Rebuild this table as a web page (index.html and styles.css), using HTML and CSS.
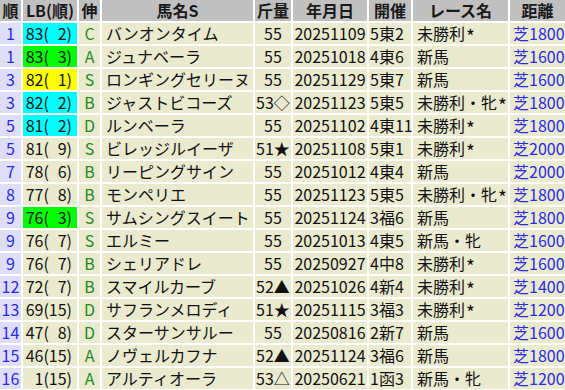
FILE: index.html
```html
<!DOCTYPE html>
<html lang="ja">
<head>
<meta charset="utf-8">
<link rel="stylesheet" href="styles.css">
</head>
<body>
<table class="tbl">
<colgroup>
<col class="w-no"><col class="w-lb"><col class="w-nb"><col class="w-name"><col class="w-kin"><col class="w-date"><col class="w-kai"><col class="w-race"><col class="w-dist">
</colgroup>
<thead>
<tr><th>順</th><th>LB(順)</th><th>伸</th><th>馬名S</th><th>斤量</th><th>年月日</th><th>開催</th><th>レース名</th><th>距離</th></tr>
</thead>
<tbody>
<tr><td class="no">1</td><td class="lb cy">83(&#8199;2)</td><td class="nb">C</td><td class="name">バンオンタイム</td><td class="kin">55</td><td class="date">20251109</td><td class="kai">5東2</td><td class="race">未勝利<span class="ast">*</span></td><td class="dist">芝1800</td></tr>
<tr><td class="no">1</td><td class="lb gr">83(&#8199;3)</td><td class="nb">A</td><td class="name">ジュナベーラ</td><td class="kin">55</td><td class="date">20251018</td><td class="kai">4東6</td><td class="race">新馬</td><td class="dist">芝1600</td></tr>
<tr><td class="no">3</td><td class="lb ye">82(&#8199;1)</td><td class="nb">S</td><td class="name">ロンギングセリーヌ</td><td class="kin">55</td><td class="date">20251129</td><td class="kai">5東7</td><td class="race">新馬</td><td class="dist">芝1600</td></tr>
<tr><td class="no">3</td><td class="lb cy">82(&#8199;2)</td><td class="nb">B</td><td class="name">ジャストビコーズ</td><td class="kin">53◇</td><td class="date">20251123</td><td class="kai">5東5</td><td class="race">未勝利・牝<span class="ast">*</span></td><td class="dist">芝1800</td></tr>
<tr><td class="no">5</td><td class="lb cy">81(&#8199;2)</td><td class="nb">D</td><td class="name">ルンベーラ</td><td class="kin">55</td><td class="date">20251102</td><td class="kai">4東11</td><td class="race">未勝利<span class="ast">*</span></td><td class="dist">芝1800</td></tr>
<tr><td class="no">5</td><td class="lb">81(&#8199;9)</td><td class="nb">S</td><td class="name">ビレッジルイーザ</td><td class="kin">51★</td><td class="date">20251108</td><td class="kai">5東1</td><td class="race">未勝利<span class="ast">*</span></td><td class="dist">芝2000</td></tr>
<tr><td class="no">7</td><td class="lb">78(&#8199;6)</td><td class="nb">B</td><td class="name">リーピングサイン</td><td class="kin">55</td><td class="date">20251012</td><td class="kai">4東4</td><td class="race">新馬</td><td class="dist">芝2000</td></tr>
<tr><td class="no">8</td><td class="lb">77(&#8199;8)</td><td class="nb">B</td><td class="name">モンペリエ</td><td class="kin">55</td><td class="date">20251123</td><td class="kai">5東5</td><td class="race">未勝利・牝<span class="ast">*</span></td><td class="dist">芝1800</td></tr>
<tr><td class="no">9</td><td class="lb gr">76(&#8199;3)</td><td class="nb">S</td><td class="name">サムシングスイート</td><td class="kin">55</td><td class="date">20251124</td><td class="kai">3福6</td><td class="race">新馬</td><td class="dist">芝1800</td></tr>
<tr><td class="no">9</td><td class="lb">76(&#8199;7)</td><td class="nb">S</td><td class="name">エルミー</td><td class="kin">55</td><td class="date">20251013</td><td class="kai">4東5</td><td class="race">新馬・牝</td><td class="dist">芝1600</td></tr>
<tr><td class="no">9</td><td class="lb">76(&#8199;7)</td><td class="nb">B</td><td class="name">シェリアドレ</td><td class="kin">55</td><td class="date">20250927</td><td class="kai">4中8</td><td class="race">未勝利<span class="ast">*</span></td><td class="dist">芝1600</td></tr>
<tr><td class="no">12</td><td class="lb">72(&#8199;7)</td><td class="nb">B</td><td class="name">スマイルカーブ</td><td class="kin">52▲</td><td class="date">20251026</td><td class="kai">4新4</td><td class="race">未勝利<span class="ast">*</span></td><td class="dist">芝1400</td></tr>
<tr><td class="no">13</td><td class="lb">69(15)</td><td class="nb">D</td><td class="name">サフランメロディ</td><td class="kin">51★</td><td class="date">20251115</td><td class="kai">3福3</td><td class="race">未勝利<span class="ast">*</span></td><td class="dist">芝1200</td></tr>
<tr><td class="no">14</td><td class="lb">47(&#8199;8)</td><td class="nb">D</td><td class="name">スターサンサルー</td><td class="kin">55</td><td class="date">20250816</td><td class="kai">2新7</td><td class="race">新馬</td><td class="dist">芝1600</td></tr>
<tr><td class="no">15</td><td class="lb">46(15)</td><td class="nb">A</td><td class="name">ノヴェルカフナ</td><td class="kin">52▲</td><td class="date">20251124</td><td class="kai">3福6</td><td class="race">新馬</td><td class="dist">芝1800</td></tr>
<tr><td class="no">16</td><td class="lb">1(15)</td><td class="nb">A</td><td class="name">アルティオーラ</td><td class="kin">53△</td><td class="date">20250621</td><td class="kai">1函3</td><td class="race">新馬・牝</td><td class="dist">芝1200</td></tr>
</tbody>
</table>
</body>
</html>
```
FILE: styles.css
```css
html, body {
  margin: 0;
  padding: 0;
  background: #ffffff;
}
body {
  font-family: "Noto Sans CJK JP", "Noto Sans", sans-serif;
  font-size: 16px;
  color: #111111;
}
.tbl {
  table-layout: fixed;
  border-collapse: separate;
  border-spacing: 2px;
  margin: -2px 0 0 -2px;
  width: 569px;
}
.w-no { width: 21px; }
.w-lb { width: 54px; }
.w-nb { width: 21px; }
.w-name { width: 151px; }
.w-kin { width: 36px; }
.w-date { width: 74px; }
.w-kai { width: 42px; }
.w-race { width: 95px; }
.w-dist { width: 55px; }
.tbl th, .tbl td {
  height: 21px;
  padding: 0;
  line-height: 21px;
  white-space: nowrap;
}
.tbl th {
  background: #c0c0c0;
  font-weight: bold;
  text-align: center;
  font-size: 16px;
  color: #1a1a1a;
}
.tbl td {
  background: #eaeacf;
}
.tbl td.no {
  background: #dedefa;
  color: #2a2ae6;
  text-align: center;
}
.tbl td.lb {
  text-align: right;
  padding-right: 5px;
}
.tbl td.cy { background: #00ffff; }
.tbl td.gr { background: #00ff00; }
.tbl td.ye { background: #ffff00; }
.tbl td.nb {
  text-align: center;
  color: #1f8a1f;
}
.tbl td.name {
  padding-left: 4px;
}
.tbl td.kin {
  text-align: center;
}
.tbl td.date {
  text-align: center;
}
.tbl td.kai {
  padding-left: 1px;
}
.tbl td.race {
  padding-left: 4px;
}
.ast {
  position: relative;
  top: 4px;
  font-size: 19px;
  line-height: 0;
  margin-left: 1px;
}
.tbl td.dist {
  padding-left: 3px;
  color: #2a2ae6;
}
```
